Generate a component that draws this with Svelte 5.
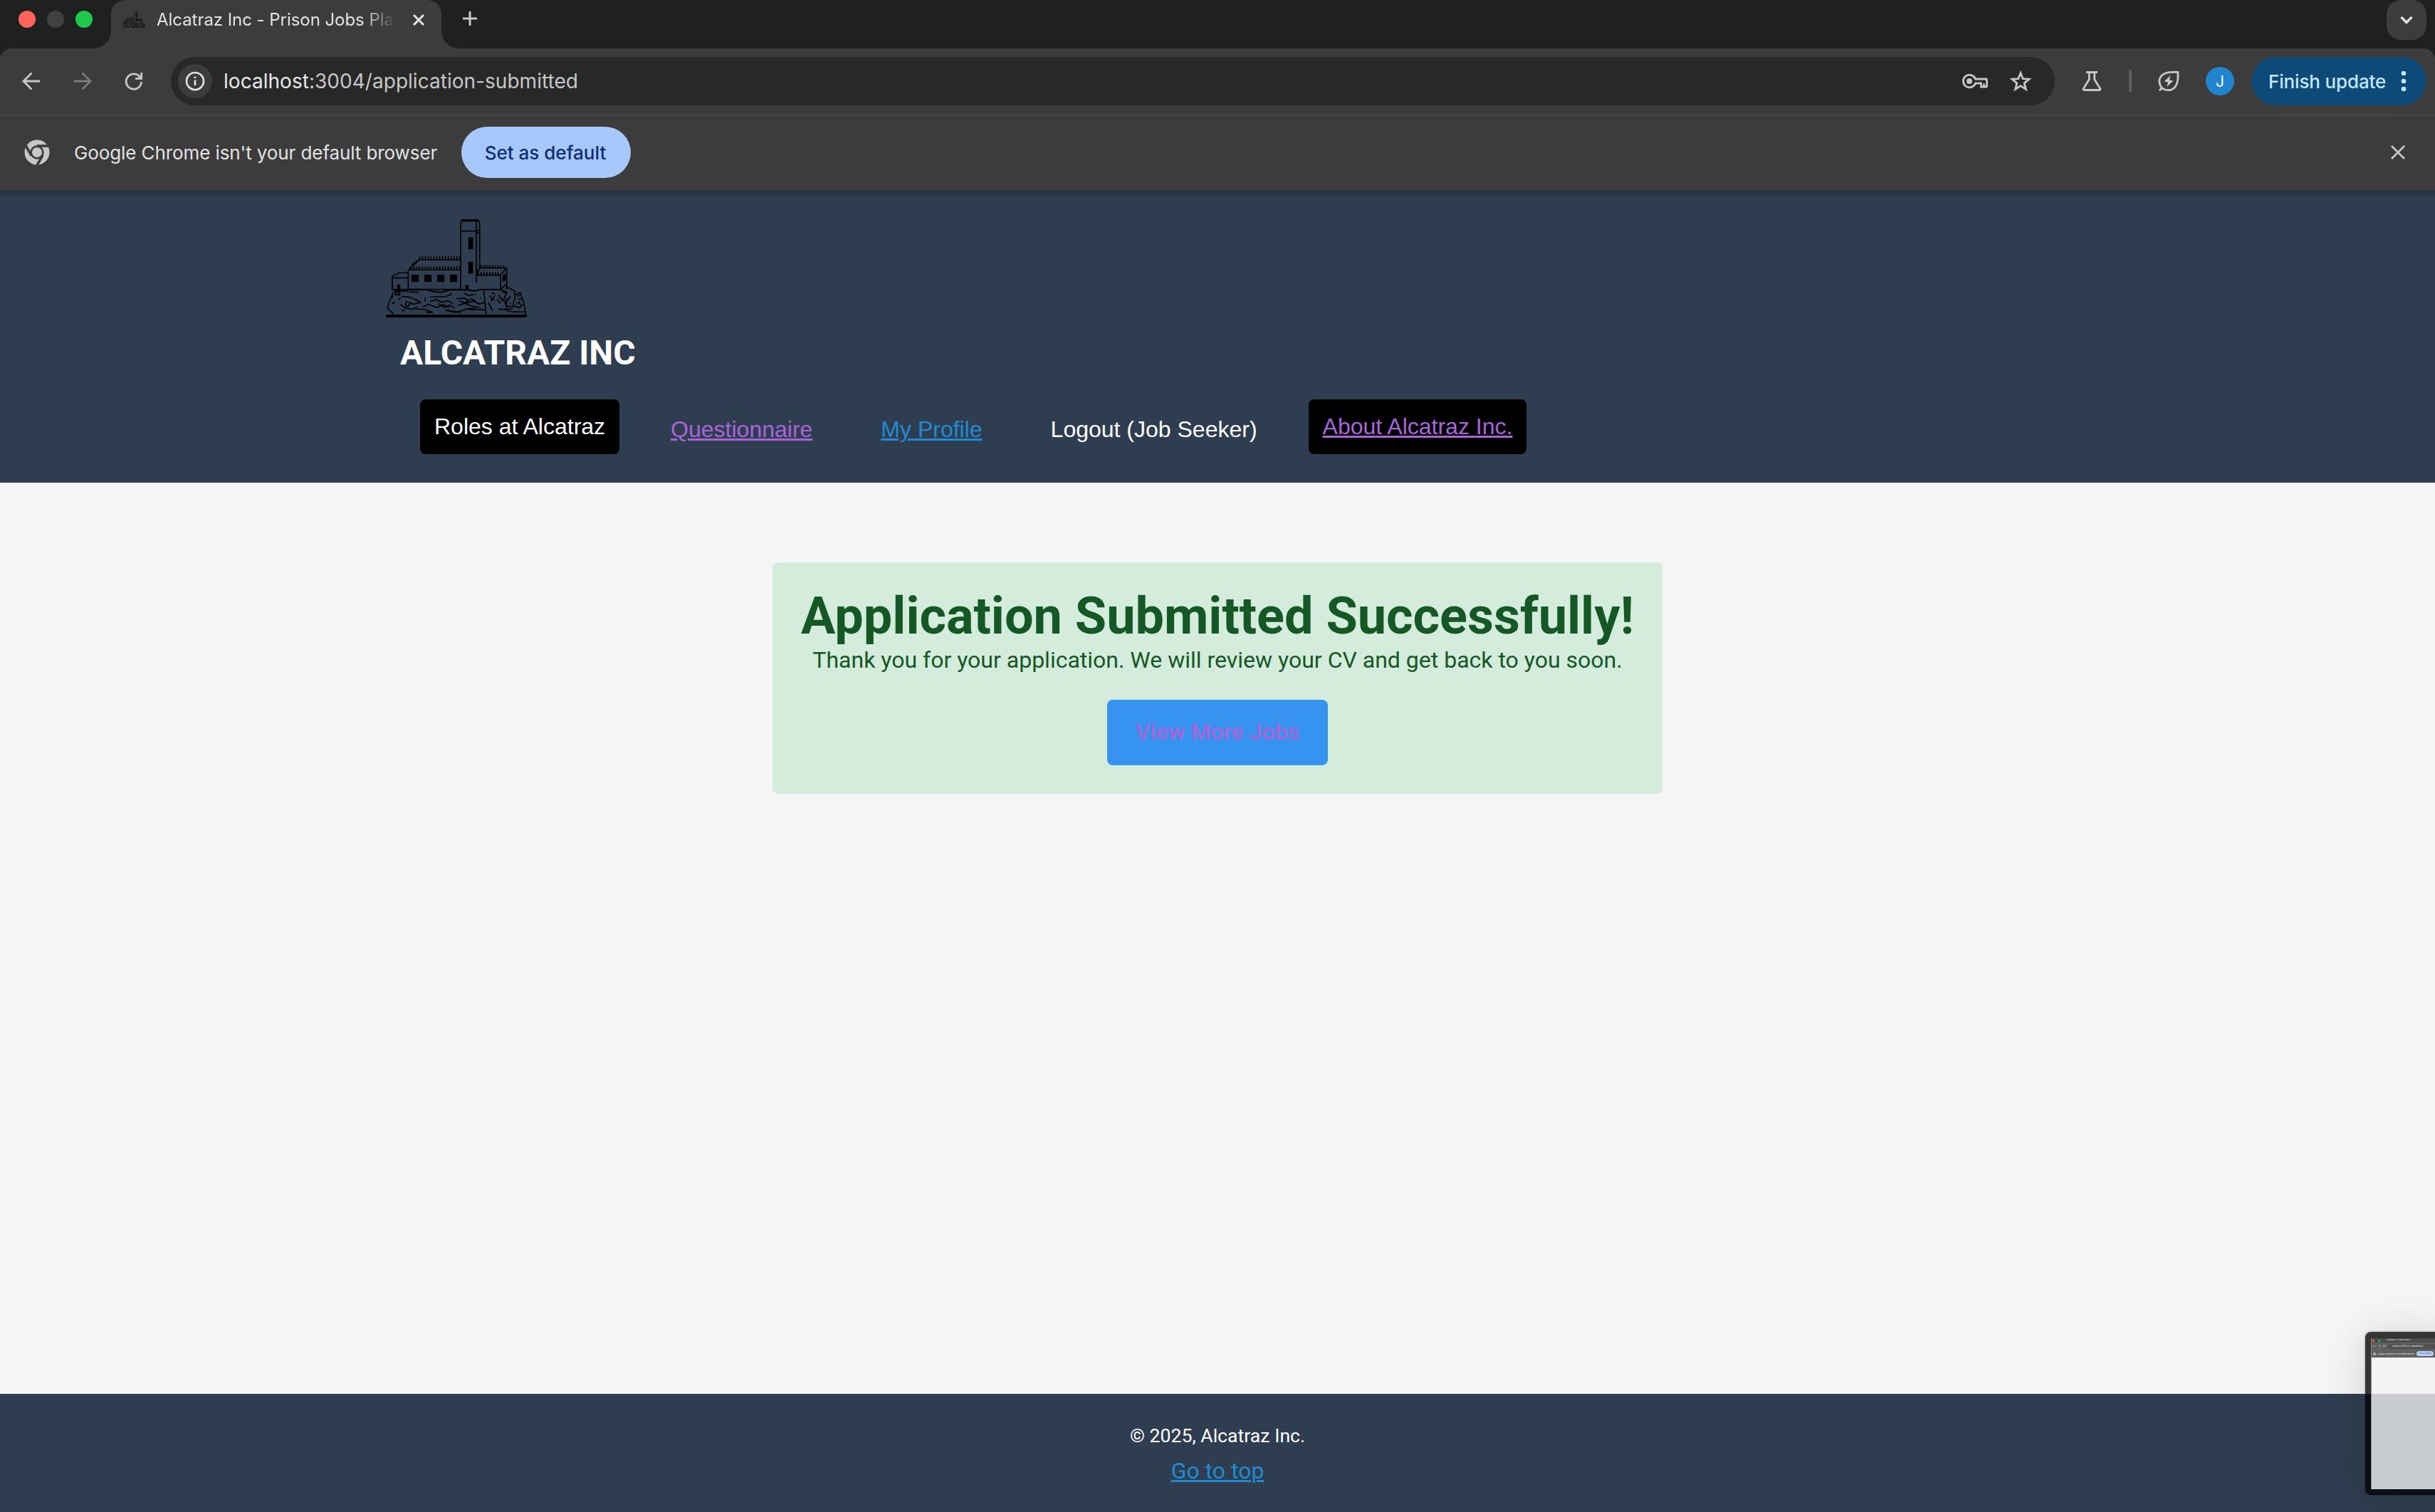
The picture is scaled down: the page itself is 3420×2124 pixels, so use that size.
<script>
  const navItems = [
    { label: 'Roles at Alcatraz', kind: 'boxed plain' },
    { label: 'Questionnaire', kind: 'visited' },
    { label: 'My Profile', kind: 'link' },
    { label: 'Logout (Job Seeker)', kind: 'plain' },
    { label: 'About Alcatraz Inc.', kind: 'boxed visited' }
  ];
</script>

{#snippet castle()}
  <svg viewBox="66 54 594 414" fill="none" stroke="#000" stroke-width="5">
    <path d="M66 462H660" stroke-width="12" />
    <path d="M384 59H456" stroke-width="10" />
    <path d="M381 64V350M381 104H447M447 60V322M456 58L461 68V262M447 104L461 98M447 110L461 112M381 68L387 58" />
    <path d="M414 131h18v49h-18zM414 234h18v48h-18zM175 289h28v28h-28zM229 289h28v28h-28zM283 289h28v28h-28zM337 289h28v28h-28zM402 332h11v20h-11zM114 330h11v34h-11zM558 292l12-8v28l-12 4z" fill="#000" stroke-width="2" />
    <path d="M206 217H380" stroke-width="14" stroke-dasharray="5 7" />
    <path d="M170 259H380" stroke-width="13" stroke-dasharray="5 7" />
    <path d="M464 253H572" stroke-width="13" stroke-dasharray="5 7" />
    <path d="M453 283H548" stroke-width="13" stroke-dasharray="5 7" />
    <path d="M204 225H380M162 267H380M160 270V350M206 226L162 266M200 228L176 246" />
    <path d="M93 296V350H380M93 301H158M93 293L124 279H160" />
    <path d="M463 259H575V350M452 266L448 290H549V348M549 290L572 262M549 348L572 330M462 262L450 280" />
    <path d="M100 356H162M106 358v14h18v-14M160 350H236L262 358L298 362L334 352H414L440 356L462 350H552L576 362" stroke-width="6" />
    <path d="M97 362L80 402L73 428L98 454M478 352L488 455M572 336L608 356L610 396M554 358L574 366L562 392L574 418M612 372L632 362L646 402L657 460" />
    <path d="M132 380L160 381L186 390L212 404L184 412L150 400M150 402V424M126 412L148 428L176 434L200 424M118 392L128 386M92 412L104 402M90 388L96 376M164 360L204 362M132 440L146 438M168 410L156 424M232 384V402M252 381H316L332 374L346 366M252 400L278 392L300 404L330 398L348 410M222 424L246 412L280 426L306 414L334 426M190 432L228 434L262 446M288 410L312 426L336 416L356 430M322 436L350 446L378 442L406 432L484 436M362 390L394 386L416 396L398 406L374 398M396 366L414 376L436 370M398 410L434 398L460 412L480 404M370 418L398 408L432 422L466 426M408 432L434 438M420 388L444 398M442 374L448 370M462 386H467" />
    <path d="M504 376L514 392M526 376L508 400M534 390L548 408M498 406L516 440M542 372L558 400M570 422H604M574 386V420M590 378L578 400M604 396V420L630 426L644 412M616 412L626 402L634 416M588 410h6M540 434H566L594 444H650M512 366L526 368M620 380L630 372M626 392L640 388M516 388l8 8M566 432l34 0" />
    <path d="M318 438L380 446M404 431H444M238 446H264" stroke-width="6" />
  </svg>
{/snippet}

<div class="screen">
  <div class="tabstrip">
    <div class="lights"><i class="red"></i><i class="grey"></i><i class="green"></i></div>
    <div class="tab">
      <span class="favicon">{@render castle()}</span>
      <span class="tabtitle">Alcatraz Inc - Prison Jobs Pla</span>
      <svg class="tabclose" viewBox="0 0 20 20"><path d="M3 3L17 17M17 3L3 17" /></svg>
    </div>
    <svg class="plus" viewBox="0 0 24 24"><path d="M12 2V22M2 12H22" /></svg>
    <div class="tabsearch"><svg viewBox="0 0 20 12"><path d="M2.500 2L10 9.500L17.500 2" /></svg></div>
  </div>

  <div class="toolbar">
    <svg class="nav-icon" viewBox="0 0 28 28"><path d="M26 14H3.500M14.500 2.500L3 14L14.500 25.500" /></svg>
    <svg class="nav-icon dim" viewBox="0 0 28 28"><path d="M2 14H24.500M13.500 2.500L25 14L13.500 25.500" /></svg>
    <svg class="nav-icon" viewBox="0 0 28 28"><path d="M24.600 15A10.700 10.700 0 1 1 22 7.500L24 9.500M24.700 2V10.400H16" /></svg>
    <div class="omnibox">
      <span class="info">
        <svg viewBox="0 0 28 28"><circle cx="14" cy="14" r="12" /><path d="M14 12.500V20M14 7.500V10" /></svg>
      </span>
      <span class="url"><b>localhost</b>:3004/application-submitted</span>
      <svg class="key" viewBox="0 0 36 22"><path d="M18.500 8H33a1.500 1.500 0 0 1 1.500 1.500V17.500a1.500 1.500 0 0 1-1.500 1.500H26.500V14H18.500A8.800 8.800 0 1 1 18.500 8Z" /><path d="M30.500 14.500V18" /><circle cx="10" cy="11" r="4" /></svg>
      <svg class="star" viewBox="0 0 32 32"><path d="M16 4.500L19.200 12.600L28 13.200L21.200 18.800L23.400 27.300L16 22.600L8.600 27.300L10.800 18.800L4 13.200L12.800 12.600Z" /></svg>
    </div>
    <svg class="flask" viewBox="0 0 28 28"><path d="M6 1.500H22M10.300 2V11.500L2.200 24.500Q1.500 26.500 3.500 26.500H24.500Q26.500 26.500 25.800 24.500L17.700 11.500V2" /></svg>
    <i class="divider"></i>
    <svg class="leaf" viewBox="0 0 30 30"><path d="M5.500 24.500C0 18 1 9.500 7.500 5.200C13 1.800 20.500 2 27.800 2.400C28.500 10 27.800 18 24 23C19.500 29 11 29 5.500 24.500L1.800 28.200" /><path class="bolt" d="M17.500 7L8.500 15.500L14 16.500L12.500 23L21.500 14.500L16 13.500Z" /></svg>
    <span class="avatar">J</span>
    <div class="update"><span>Finish update</span><svg viewBox="0 0 8 30"><circle cx="4" cy="4" r="3.300" /><circle cx="4" cy="15" r="3.300" /><circle cx="4" cy="26" r="3.300" /></svg></div>
  </div>

  <div class="infobar">
    <svg class="chrome" viewBox="-18 -18 36 36">
      <circle r="17.500" fill="#c7c7c7" />
      <circle r="9.700" fill="#3c3c3c" />
      <circle r="7" fill="#c7c7c7" />
      <g stroke="#3c3c3c" stroke-width="3.600">
        <path d="M0 -9H18" /><path d="M0 -9H18" transform="rotate(120)" /><path d="M0 -9H18" transform="rotate(240)" />
      </g>
    </svg>
    <span class="notice">Google Chrome isn't your default browser</span>
    <span class="default-btn">Set as default</span>
    <svg class="dismiss" viewBox="0 0 24 24"><path d="M3 3L21 21M21 3L3 21" /></svg>
  </div>

  <header>
    <div class="logo">{@render castle()}</div>
    <div class="brand">ALCATRAZ INC</div>
    <nav>
      {#each navItems as item}
        <span class="item {item.kind}">{item.label}</span>
      {/each}
    </nav>
  </header>

  <main>
    <section class="card">
      <h1>Application Submitted Successfully!</h1>
      <p>Thank you for your application. We will review your CV and get back to you soon.</p>
      <span class="jobs">View More Jobs</span>
    </section>
  </main>

  <footer>
    <div class="copy">© 2025, Alcatraz Inc.</div>
    <span class="top">Go to top</span>
  </footer>

  <div class="thumb">
    <div class="mini">
      <div class="mini-tabs"><i class="red"></i><i class="grey"></i><i class="green"></i><span>Alcatraz Inc - Prison Jobs P</span></div>
      <div class="mini-bar"><b>←</b><b>→</b><b>⟳</b><span>localhost:3004/cv-upload?job=1</span></div>
      <div class="mini-info"><i></i><span>Google Chrome isn't your default browser</span><em>Set as default</em></div>
    </div>
  </div>
</div>

<style>
  :global(body) { margin: 0; overflow: hidden; }
  .screen {
    position: relative;
    display: flex;
    flex-direction: column;
    width: 3420px;
    height: 2124px;
    overflow: hidden;
    background: #f5f5f5;
    font-family: Roboto, "Liberation Sans", sans-serif;
    white-space: nowrap;
  }
  .screen * { box-sizing: border-box; }
  svg { display: block; flex: none; }

  .tabstrip, .toolbar, .infobar { display: flex; flex: none; font-family: Inter, sans-serif; }
  .tabstrip { height: 84px; margin-bottom: -16px; background: #1f2120; }
  .lights { display: flex; gap: 16px; padding: 15px 0 0 26px; width: 156px; flex: none; }
  .lights i { width: 24px; height: 24px; border-radius: 50%; }
  .red { background: #ff6359; }
  .grey { background: #404241; }
  .green { background: #1fc94c; }
  .tab {
    position: relative;
    display: flex;
    width: 464px;
    height: 68px;
    flex: none;
    padding-left: 16px;
    background: #3c3c3c;
    border-radius: 20px 20px 0 0;
  }
  .tab::before, .tab::after { content: ""; position: absolute; bottom: 0; width: 24px; height: 24px; }
  .tab::before { left: -24px; background: radial-gradient(circle at 0 0, transparent 23.500px, #3c3c3c 24px); }
  .tab::after { right: -24px; background: radial-gradient(circle at 100% 0, transparent 23.500px, #3c3c3c 24px); }
  .favicon { width: 32px; margin-top: 13px; }
  .favicon svg { width: 32px; height: 29px; stroke-width: 8; }
  .tabtitle {
    width: 336px;
    margin-left: 16px;
    font-size: 24px;
    letter-spacing: -0.050px;
    line-height: 55px;
    height: 55px;
    color: #e3e3e3;
    -webkit-mask-image: linear-gradient(90deg, #000 288px, transparent 336px);
    mask-image: linear-gradient(90deg, #000 288px, transparent 336px);
  }
  .tabclose { width: 20px; height: 20px; margin: 18px 0 0 22px; fill: none; stroke: #e3e3e3; stroke-width: 3; }
  .plus { width: 24px; height: 24px; margin: 14px 0 0 28px; fill: none; stroke: #c7c7c7; stroke-width: 3; }
  .tabsearch {
    display: flex;
    align-items: center;
    justify-content: center;
    width: 56px;
    height: 56px;
    margin: 0 12px 0 auto;
    border-radius: 20px;
    background: #3c3c3c;
  }
  .tabsearch svg { width: 20px; height: 12px; fill: none; stroke: #e3e3e3; stroke-width: 3.400; }

  .toolbar {
    position: relative;
    align-items: center;
    height: 94px;
    padding: 0 12px 0 30px;
    border-bottom: 2px solid #474747;
    border-radius: 16px 16px 0 0;
    background: #3c3c3c;
  }
  .nav-icon { width: 28px; height: 28px; margin-right: 44px; fill: none; stroke: #c7c7c7; stroke-width: 2.800; }
  .dim { stroke: #7b7b7b; }
  .nav-icon:nth-of-type(3) { margin-right: 38px; }
  .omnibox {
    display: flex;
    align-items: center;
    width: 2646px;
    height: 68px;
    padding-left: 10px;
    border-radius: 34px;
    background: #282828;
  }
  .info { display: flex; align-items: center; justify-content: center; width: 48px; height: 48px; border-radius: 50%; background: #3c3c3c; }
  .info svg { width: 28px; height: 28px; fill: none; stroke: #e3e3e3; stroke-width: 2.600; }
  .url { margin-left: 16px; font-size: 28px; letter-spacing: 0.030px; line-height: 68px; color: #c7c7c7; }
  .url b { font-weight: 400; color: #e9e9e9; }
  .key { width: 36px; height: 22px; margin-left: auto; fill: none; stroke: #c7c7c7; stroke-width: 2.800; }
  .key circle { fill: #c7c7c7; stroke: none; }
  .star { width: 32px; height: 32px; margin: 0 32px 0 30px; fill: none; stroke: #c7c7c7; stroke-width: 2.800; }
  .flask { width: 28px; height: 28px; margin-left: 38px; fill: none; stroke: #c7c7c7; stroke-width: 2.800; }
  .divider { width: 4px; height: 32px; margin-left: 38px; border-radius: 2px; background: #5e5e5e; }
  .leaf { width: 30px; height: 30px; margin-left: 37px; fill: none; stroke: #c7c7c7; stroke-width: 2.800; }
  .leaf .bolt { fill: #c7c7c7; stroke: none; }
  .avatar {
    width: 40px;
    height: 40px;
    margin-left: 37px;
    border-radius: 50%;
    background: #2184cf;
    color: #fff;
    font-size: 21px;
    line-height: 41px;
    text-align: center;
  }
  .update {
    display: flex;
    align-items: center;
    width: 246px;
    height: 68px;
    margin-left: auto;
    padding-left: 24px;
    border-radius: 34px;
    background: #0e4a77;
    color: #c2e7ff;
    font-size: 26px;
    font-weight: 500;
    letter-spacing: -0.150px;
  }
  .update svg { width: 8px; height: 30px; margin-left: 21px; fill: #c2e7ff; }

  .infobar { align-items: center; height: 105px; border-bottom: 1px solid #474747; background: #3c3c3c; }
  .chrome { width: 36px; height: 36px; margin-left: 34px; }
  .notice { width: 544px; margin-left: 34px; padding-top: 1px; font-size: 26px; letter-spacing: -0.100px; color: #e3e3e3; }
  .default-btn {
    width: 238px;
    height: 72px;
    padding-right: 2px;
    border-radius: 36px;
    background: #a8c7fa;
    color: #0a2f72;
    font-size: 26px;
    font-weight: 500;
    line-height: 73px;
    text-align: center;
  }
  .dismiss { width: 24px; height: 24px; margin: 0 40px 0 auto; fill: none; stroke: #c7c7c7; stroke-width: 2.800; }

  header {
    flex: none;
    height: 411px;
    padding: 41px 0 0 542px;
    background: linear-gradient(#232f3b, #2f3d50 12px);
  }
  .logo svg { width: 198px; height: 138px; }
  .brand { margin: 22px 0 0 20px; font-size: 48px; font-weight: 700; line-height: 56px; color: #fff; }
  nav { display: flex; gap: 48px; margin: 37px 0 0 48px; font-family: "Liberation Sans", Arial, sans-serif; }
  .item { height: 77px; padding: 0 24px; font-size: 32px; line-height: 84px; color: #fff; }
  .item.boxed { padding: 0 20px; border-radius: 8px; background: #000; line-height: 76px; }
  .item.visited, .item.link { text-decoration: underline; text-decoration-thickness: 3px; text-underline-offset: 2px; }
  .item.visited { color: #a865d8; }
  .item.link { color: #218bd2; }

  main { flex: 1; display: flex; justify-content: center; align-items: flex-start; padding-top: 112px; }
  .card {
    display: flex;
    flex-direction: column;
    align-items: center;
    width: 1250px;
    height: 325px;
    padding-top: 34px;
    border-radius: 8px;
    background: #d4ecdb;
    color: #155725;
  }
  h1 { margin: 0; font-size: 72px; font-weight: 700; line-height: 84px; }
  p { margin: 0; font-size: 32px; line-height: 38px; }
  .jobs {
    width: 310px;
    height: 92px;
    margin-top: 37px;
    border-radius: 8px;
    background: #3793f0;
    color: #a865d8;
    font-size: 32px;
    font-weight: 500;
    line-height: 90px;
    text-align: center;
  }

  footer {
    display: flex;
    flex-direction: column;
    align-items: center;
    flex: none;
    height: 166px;
    padding-top: 42px;
    background: #2f3d50;
    color: #fff;
  }
  .copy { font-size: 26.670px; line-height: 34px; }
  .top {
    margin-top: 13px;
    font-size: 32px;
    line-height: 38px;
    color: #218bd2;
    text-decoration: underline;
    text-decoration-thickness: 3px;
    text-underline-offset: 2px;
  }

  /* floating capture preview sliding off the right edge */
  .thumb {
    position: absolute;
    left: 3322px;
    top: 1871px;
    width: 120px;
    height: 229px;
    padding: 9px 0 8px 8px;
    border-radius: 8px;
    background: linear-gradient(#353535 87px, #0a0e12 87px);
    box-shadow: 0 4px 60px rgba(0, 0, 0, .14), 0 0 3px rgba(0, 0, 0, .4);
  }
  .mini {
    height: 212px;
    overflow: hidden;
    border-left: 1px solid #8d8d8d;
    background: linear-gradient(#f4f4f4 78px, #c9ccd0 78px);
    font: 4px/6px Inter, sans-serif;
    color: #eee;
  }
  .mini > div { display: flex; align-items: center; }
  .mini i { flex: none; width: 3px; height: 3px; margin-left: 1px; border-radius: 50%; }
  .mini-tabs { height: 6px; background: #4c4e4d; }
  .mini-tabs span { margin-left: 9px; font-size: 2.500px; }
  .mini-bar { height: 10px; gap: 3px; padding-left: 2px; background: #606060; font-size: 4px; }
  .mini-bar b { width: 4px; font-weight: 400; }
  .mini-bar span { flex: 1; height: 7px; padding-left: 6px; border-radius: 4px; background: #505050; font-size: 2.900px; line-height: 7px; }
  .mini-info { height: 11px; background: #606060; font-size: 2.600px; }
  .mini-info i { width: 4px; height: 4px; margin: 0 3px 0 2px; border: 1px solid #ddd; }
  .mini-info em { width: 24px; height: 7px; margin-left: 3px; border-radius: 4px; background: #b9d0fa; color: #3a5590; font-style: normal; line-height: 7px; text-align: center; }
</style>
